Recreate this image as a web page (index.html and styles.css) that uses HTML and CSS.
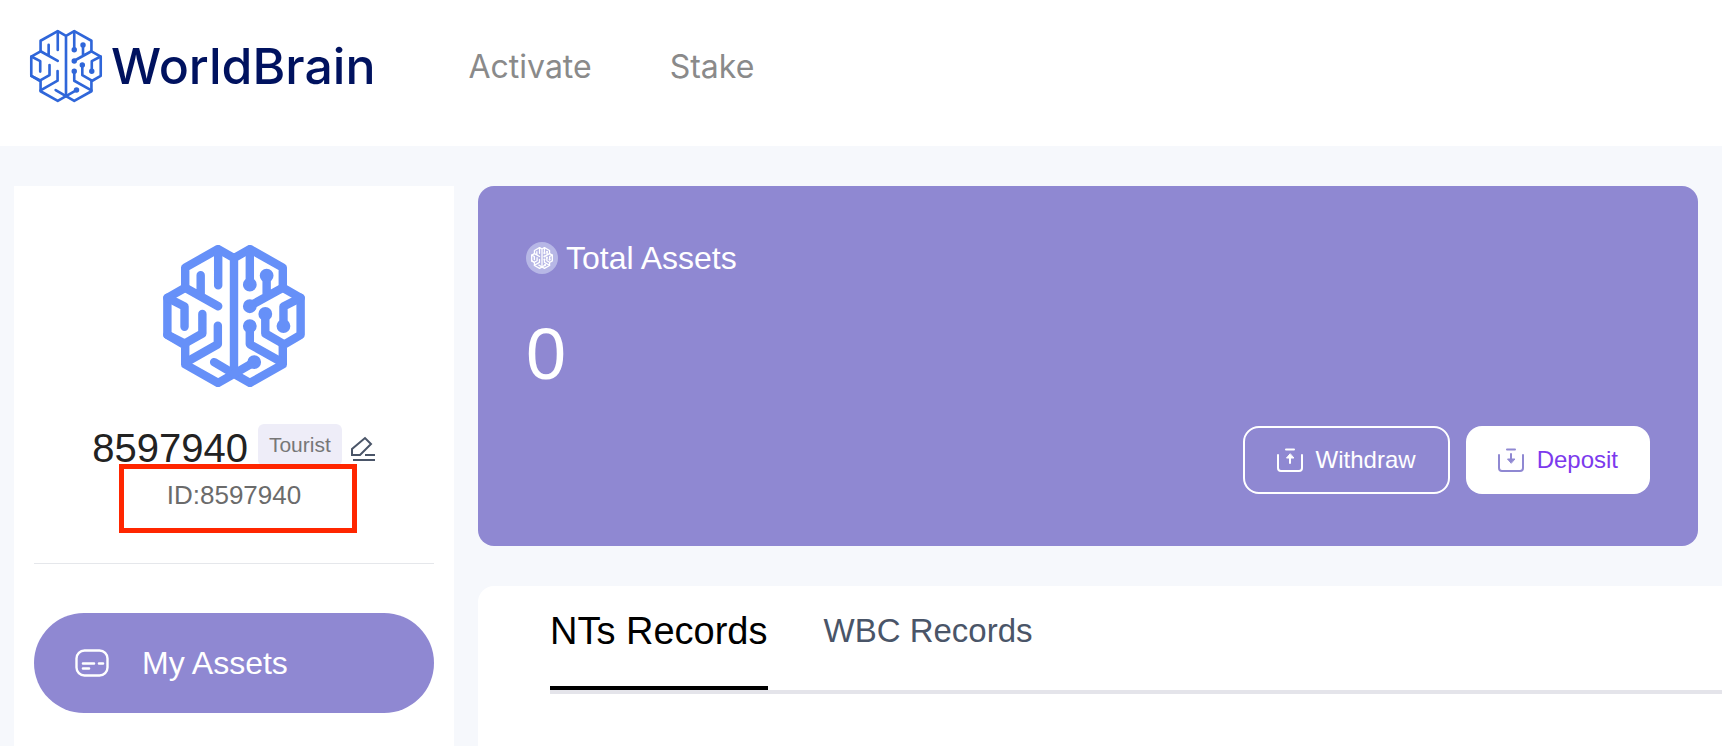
FILE: index.html
```html
<!DOCTYPE html>
<html lang="en">
<head>
  <meta charset="UTF-8">
  <meta name="viewport" content="width=device-width, initial-scale=1.0">
  <title>WorldBrain</title>
  <link rel="stylesheet" href="styles.css">
</head>
<body>
  <!-- shared brain symbol -->
  <svg class="sprite" aria-hidden="true">
    <symbol id="brain" viewBox="51 45 422 422">
      <path d="M262 84L215 57L117 112V172L64 202V312L117 343V400L215 455L262 428L309 455L407 400V343L460 312V202L407 172V112L309 57L262 84V428"/>
      <path d="M215 60V165M163 135V195M117 172L215 227M64 202L115 228V288M64 312L115 338L168 308V250M117 395L214 340V285M203 393L262 428"/>
      <path d="M309 60V162M359 135V195M407 172L309 226M460 202L409 228V285M355 248V308L407 338M309 285V340L407 395M322 393L262 428"/>
      <g class="dots">
        <circle cx="309" cy="163" r="8"/>
        <circle cx="359" cy="136" r="8"/>
        <circle cx="309" cy="227" r="8"/>
        <circle cx="355" cy="250" r="8"/>
        <circle cx="409" cy="286" r="8"/>
        <circle cx="309" cy="286" r="8"/>
        <circle cx="322" cy="393" r="8"/>
      </g>
    </symbol>
  </svg>

  <header class="header">
    <a class="logo" href="#">
      <svg class="brain logo-icon" aria-hidden="true"><use href="#brain"/></svg>
      <span>WorldBrain</span>
    </a>
    <nav class="nav">
      <a href="#">Activate</a>
      <a href="#">Stake</a>
    </nav>
  </header>

  <div class="page">
    <aside class="sidebar">
      <svg class="brain avatar" aria-hidden="true"><use href="#brain"/></svg>
      <div class="user-row">
        <span class="user-name">8597940</span>
        <span class="badge">Tourist</span>
        <button class="edit-btn" type="button" aria-label="Edit name">
          <svg width="26" height="26" viewBox="0 0 26 26" fill="none" stroke="currentColor" stroke-width="2">
            <path d="M2 19V13L15 2L21 8L10 19ZM15 19H25M3 24H25"/>
          </svg>
        </button>
      </div>
      <div class="user-id">ID:8597940</div>
      <nav class="menu">
        <a class="menu-item active" href="#">
          <svg width="34" height="28" viewBox="0 0 34 28" fill="none" stroke="currentColor" stroke-linecap="round">
            <rect x="1.5" y="1.5" width="31" height="25" rx="8" stroke-width="2.4"/>
            <path d="M8 14.5H19M24 14.5H28M8 19.5H14" stroke-width="2.6"/>
          </svg>
          <span>My Assets</span>
        </a>
      </nav>
    </aside>

    <main class="main">
      <section class="assets">
        <h2 class="assets-title">
          <span class="coin"><svg class="brain" aria-hidden="true"><use href="#brain"/></svg></span>
          Total Assets
        </h2>
        <div class="amount">0</div>
        <div class="actions">
          <button class="btn btn-outline" type="button">
            <svg width="26" height="24" viewBox="0 0 26 24" fill="none" stroke="currentColor" stroke-width="2" stroke-linecap="round" stroke-linejoin="round">
              <path d="M1 7V20Q1 23 4 23H22Q25 23 25 20V7M9 1.5H17M13 15V9"/>
              <path d="M13 6L9.500 10H16.500Z" fill="currentColor" stroke-width="1"/>
            </svg>
            Withdraw
          </button>
          <button class="btn btn-solid" type="button">
            <svg width="26" height="24" viewBox="0 0 26 24" fill="none" stroke="currentColor" stroke-width="2" stroke-linecap="round" stroke-linejoin="round">
              <path d="M1 7V20Q1 23 4 23H22Q25 23 25 20V7M9 1.5H17M13 6V12"/>
              <path d="M13 15L9.500 11H16.500Z" fill="currentColor" stroke-width="1"/>
            </svg>
            Deposit
          </button>
        </div>
      </section>

      <section class="records">
        <div class="tabs" role="tablist">
          <button class="tab active" type="button" role="tab" aria-selected="true">NTs Records</button>
          <button class="tab" type="button" role="tab" aria-selected="false">WBC Records</button>
        </div>
      </section>
    </main>
  </div>
</body>
</html>
```
FILE: styles.css
```css
*,
*::after {
  box-sizing: border-box;
}
body {
  margin: 0;
  min-height: 100vh;
  display: flex;
  flex-direction: column;
  background-color: #f6f8fc;
  font-family: Helvetica, "Liberation Sans", Arial, sans-serif;
  color: #222;
}
a {
  text-decoration: none;
  color: inherit;
}
button {
  font-family: inherit;
  border: none;
  background: none;
  padding: 0;
  cursor: pointer;
}
svg {
  display: block;
  flex-shrink: 0;
}
.sprite {
  position: absolute;
  width: 0;
  height: 0;
}
.brain {
  fill: none;
  stroke: currentColor;
  stroke-width: 25px;
  stroke-linecap: round;
  stroke-linejoin: round;
}

/* header */
.header {
  display: flex;
  align-items: center;
  height: 146px;
  padding: 0 29px 14px;
  background: #fff;
  font-family: Inter, sans-serif;
}
.logo {
  display: flex;
  align-items: center;
  gap: 8px;
  font-size: 50px;
  font-weight: 500;
  line-height: 60px;
  color: #00125f;
}
.logo-icon {
  width: 74px;
  height: 74px;
  color: #2f66d9;
  stroke-width: 15px;
}
.nav {
  display: flex;
  gap: 78px;
  margin-left: 93px;
  font-size: 32px;
  color: #8a8a8a;
}

.page {
  flex: 1;
  display: flex;
  gap: 24px;
  padding: 40px 0 0 14px;
}

/* sidebar */
.sidebar {
  width: 440px;
  flex-shrink: 0;
  padding: 59px 20px 0;
  background: #fff;
}
.avatar {
  width: 142px;
  height: 142px;
  margin: 0 auto 36px;
  color: #6690f8;
}
.user-row {
  display: flex;
  align-items: center;
  justify-content: center;
  height: 44px;
}
.user-name {
  padding-top: 6px;
  font-size: 40px;
}
.badge {
  margin: 0 8px 0 10px;
  padding: 0 11px;
  border-radius: 6px;
  background: #eeedf8;
  font-size: 21px;
  line-height: 42px;
  color: #777;
}
.edit-btn {
  margin-top: 8px;
  color: #4a5568;
}
.user-id {
  position: relative;
  padding: 12px 0 52px;
  border-bottom: 1px solid #e5e7eb;
  font-size: 26px;
  line-height: 32px;
  text-align: center;
  color: #6b6b6b;
}
/* highlight frame over the id */
.user-id::after {
  content: "";
  position: absolute;
  top: -3px;
  left: 85px;
  width: 238px;
  height: 69px;
  border: 5px solid #ff2600;
}
.menu {
  margin-top: 49px;
}
.menu-item {
  display: flex;
  align-items: center;
  gap: 33px;
  height: 100px;
  padding: 0 41px;
  border-radius: 50px;
  font-size: 32px;
}
.menu-item.active {
  background: #8f88d2;
  color: #fff;
}

/* content */
.main {
  flex: 1;
  display: flex;
  flex-direction: column;
  gap: 40px;
}
.assets {
  margin-right: 24px;
  padding: 52px 48px;
  border-radius: 16px;
  background: #8f88d2;
  color: #fff;
}
.assets-title {
  display: flex;
  align-items: center;
  gap: 8px;
  margin: 0;
  font-size: 32px;
  font-weight: 400;
  line-height: 40px;
}
.coin {
  display: flex;
  align-items: center;
  justify-content: center;
  width: 32px;
  height: 32px;
  border-radius: 50%;
  background: #b7b7e6;
}
.coin .brain {
  width: 22px;
  height: 22px;
}
.amount {
  margin-top: 36px;
  font-size: 72px;
  line-height: 80px;
}
.actions {
  display: flex;
  justify-content: flex-end;
  gap: 16px;
  margin-top: 32px;
}
.btn {
  display: flex;
  align-items: center;
  gap: 13px;
  height: 68px;
  padding: 0 32px;
  border-radius: 16px;
  font-size: 24px;
}
.btn-outline {
  border: 2px solid #fff;
  color: #fff;
}
.btn-solid {
  background: #fff;
  color: #7c3aed;
}
.btn-solid svg {
  color: #8f88d2;
}
.records {
  flex: 1;
  padding-left: 72px;
  border-top-left-radius: 16px;
  background: #fff;
}
.tabs {
  display: flex;
  gap: 56px;
  height: 108px;
  border-bottom: 4px solid #e4e4ea;
}
.tab {
  padding-bottom: 10px;
  border-bottom: 4px solid transparent;
  font-size: 33px;
  color: #4a5568;
}
.tab.active {
  border-bottom-color: #000;
  font-size: 38px;
  color: #000;
}
```
